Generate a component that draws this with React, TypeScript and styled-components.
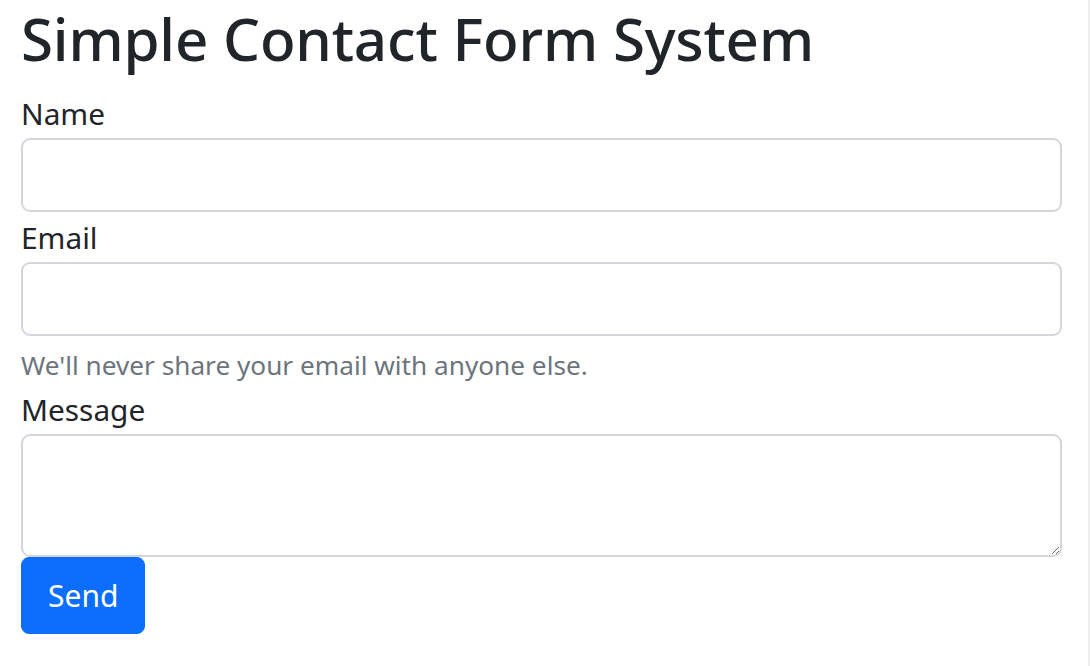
import React from "react";
import styled, { createGlobalStyle } from "styled-components";

const Global = createGlobalStyle`
  html, body {
    margin: 0;
    padding: 0;
    background: linear-gradient(to left, #eeeeee 2px, #ffffff 2px);
    min-height: 100%;
  }
  body {
    font-family: "Noto Sans", "Open Sans", Arial, sans-serif;
    color: #212529;
  }
  * { box-sizing: border-box; }
`;

const Page = styled.div`
  padding: 0 28px 0 21px;
`;

const Title = styled.h1`
  margin: 0 0 13px;
  padding-top: 3px;
  font-size: 58.3px;
  line-height: 72px;
  font-weight: 500;
  color: #212529;
  letter-spacing: -0.2px;
`;

const Form = styled.form`
  display: flex;
  flex-direction: column;
`;

const Label = styled.label`
  display: block;
  padding-top: 6px;
  margin-bottom: 4px;
  font-size: 29.8px;
  line-height: 40px;
  color: #212529;
`;

const fieldBase = `
  display: block;
  width: 100%;
  border: 2px solid #d3d7dc;
  border-radius: 9px;
  background: #fff;
  font-family: inherit;
  font-size: 28px;
  color: #212529;
  padding: 8px 22px;
  outline: none;
`;

const Input = styled.input`
  ${fieldBase}
  height: 74px;
`;

const TextArea = styled.textarea`
  ${fieldBase}
  height: 123px;
  resize: vertical;
`;

const Help = styled.div`
  margin: 11px 0 1px;
  font-size: 26.2px;
  line-height: 36px;
  color: #6c757d;
`;

const Button = styled.button`
  align-self: flex-start;
  margin-top: 0;
  padding: 16px 26px;
  font-family: inherit;
  font-size: 30px;
  line-height: 43px;
  color: #fff;
  background: #0d6efd;
  border: 1px solid #0d6efd;
  border-radius: 8px;
  cursor: pointer;
`;

export default function App() {
  return (
    <Page>
      <Global />
      <Title>Simple Contact Form System</Title>
      <Form onSubmit={(e) => e.preventDefault()}>
        <Label htmlFor="name">Name</Label>
        <Input id="name" type="text" />
        <Label htmlFor="email">Email</Label>
        <Input id="email" type="email" />
        <Help>We'll never share your email with anyone else.</Help>
        <Label htmlFor="message">Message</Label>
        <TextArea id="message" />
        <Button type="submit">Send</Button>
      </Form>
    </Page>
  );
}
